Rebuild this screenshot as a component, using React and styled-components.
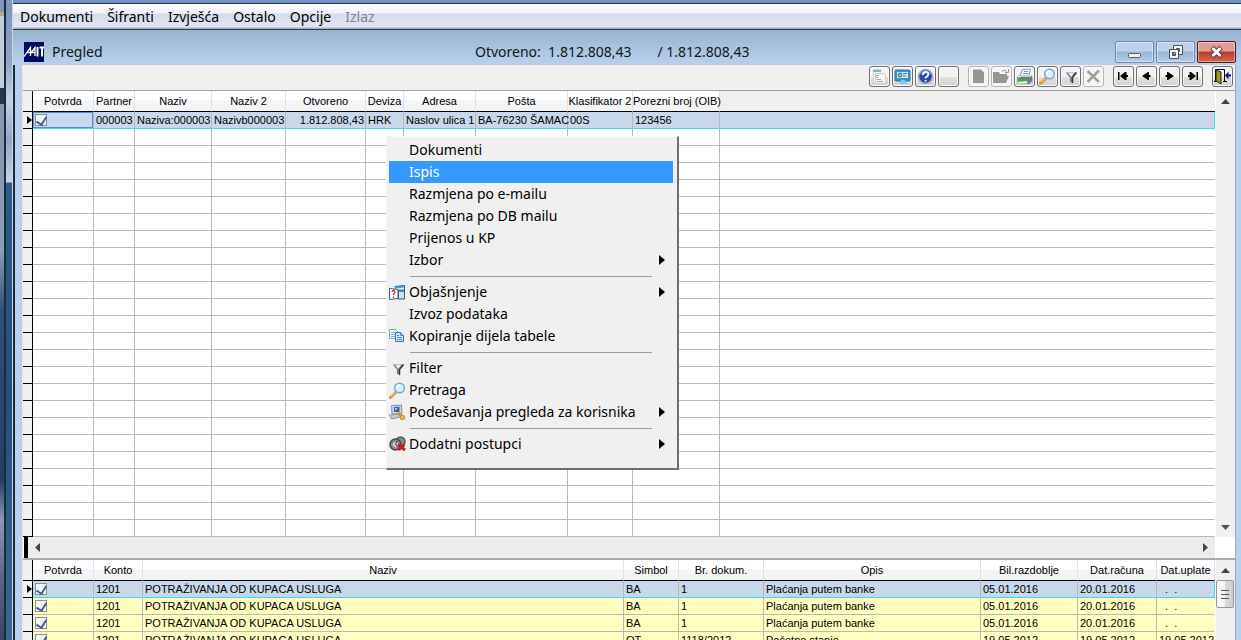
import { styled, createGlobalStyle } from "styled-components"

const menuBarItems = ["Dokumenti", "Šifranti", "Izvješća", "Ostalo", "Opcije"]

const partnerColumns = [
    { label: "Potvrda", width: 61 },
    { label: "Partner", width: 41 },
    { label: "Naziv", width: 77 },
    { label: "Naziv 2", width: 74 },
    { label: "Otvoreno", width: 80, align: "right" },
    { label: "Deviza", width: 38 },
    { label: "Adresa", width: 72 },
    { label: "Pošta", width: 92 },
    { label: "Klasifikator 2", width: 65 },
    { label: "Porezni broj (OIB)", width: 87 },
]

const partnerRow = ["000003", "Naziva:000003", "Nazivb000003", "1.812.808,43", "HRK", "Naslov ulica 1", "BA-76230 ŠAMAC", "00S", "123456"]

const documentColumns = [
    { label: "Potvrda", width: 61 },
    { label: "Konto", width: 49 },
    { label: "Naziv", width: 481 },
    { label: "Simbol", width: 55 },
    { label: "Br. dokum.", width: 85 },
    { label: "Opis", width: 217 },
    { label: "Bil.razdoblje", width: 97 },
    { label: "Dat.računa", width: 79 },
    { label: "Dat.uplate" },
]

const payment = ["1201", "POTRAŽIVANJA OD KUPACA USLUGA", "BA", "1", "Plaćanja putem banke", "05.01.2016", "20.01.2016", "\u00a0\u00a0.\u00a0\u00a0."]

const documentRows = [
    payment,
    payment,
    payment,
    ["1201", "POTRAŽIVANJA OD KUPACA USLUGA", "OT", "1118/2012", "Početno stanje", "19.05.2012", "19.05.2012", "19.05.2012"],
]

const contextMenu = [
    [
        { label: "Dokumenti" },
        { label: "Ispis", active: true },
        { label: "Razmjena po e-mailu" },
        { label: "Razmjena po DB mailu" },
        { label: "Prijenos u KP" },
        { label: "Izbor", submenu: true },
    ],
    [
        { label: "Objašnjenje", icon: <ExplainIcon />, submenu: true },
        { label: "Izvoz podataka" },
        { label: "Kopiranje dijela tabele", icon: <CopyIcon /> },
    ],
    [
        { label: "Filter", icon: <FunnelIcon /> },
        { label: "Pretraga", icon: <SearchIcon /> },
        { label: "Podešavanja pregleda za korisnika", icon: <SettingsIcon />, submenu: true },
    ],
    [
        { label: "Dodatni postupci", icon: <GearsIcon />, submenu: true },
    ],
]

const toolGroups = [
    [
        { name: "Svojstva", icon: <PropertiesIcon /> },
        { name: "Zaslon", icon: <MonitorIcon /> },
        { name: "Pomoć", icon: <HelpIcon /> },
        { name: "Prazno" },
    ],
    [
        { name: "Novi", icon: <NewIcon />, disabled: true },
        { name: "Otvori", icon: <OpenIcon />, disabled: true },
        { name: "Ispis", icon: <PrinterIcon /> },
        { name: "Pretraga", icon: <SearchIcon /> },
        { name: "Filter", icon: <FunnelIcon /> },
        { name: "Briši", icon: <DeleteIcon />, disabled: true },
    ],
    [
        { name: "Prvi", icon: <NavIcon variant="first" /> },
        { name: "Prethodni", icon: <NavIcon variant="prev" /> },
        { name: "Sljedeći", icon: <NavIcon variant="next" /> },
        { name: "Zadnji", icon: <NavIcon variant="last" /> },
    ],
    [
        { name: "Izlaz", icon: <ExitIcon /> },
    ],
]

export default function App() {
    return (
        <Desktop>
            <GlobalStyle />
            <Backdrop />
            <WindowEdge />
            <Window>
                <MenuBar>
                    {menuBarItems.map(item => <MenuBarItem key={item}>{item}</MenuBarItem>)}
                    <MenuBarItem disabled>Izlaz</MenuBarItem>
                </MenuBar>
                <TitleBar>
                    <Logo />
                    <Title>Pregled</Title>
                    <Amounts>
                        <span>Otvoreno:&nbsp; 1.812.808,43</span>
                        <span>/ 1.812.808,43</span>
                    </Amounts>
                    <Controls>
                        <ControlButton aria-label="Smanji"><MinimizeIcon /></ControlButton>
                        <ControlButton aria-label="Vrati"><RestoreIcon /></ControlButton>
                        <ControlButton aria-label="Zatvori" $close><CloseIcon /></ControlButton>
                    </Controls>
                </TitleBar>
                <Frame>
                    <Panel>
                        <Toolbar>
                            {toolGroups.map((group, i) => (
                                <ToolGroup key={i}>
                                    {group.map(tool => (
                                        <ToolButton key={tool.name} aria-label={tool.name} disabled={tool.disabled}>
                                            {tool.icon}
                                        </ToolButton>
                                    ))}
                                </ToolGroup>
                            ))}
                        </Toolbar>
                        <GridArea>
                            <PartnerTable />
                            <VerticalScroll>
                                <ScrollButton aria-label="Gore"><Arrow dir="up" /></ScrollButton>
                                <ScrollButton aria-label="Dolje"><Arrow dir="down" /></ScrollButton>
                            </VerticalScroll>
                            <ContextMenu />
                        </GridArea>
                        <HorizontalScroll>
                            <SplitHandle />
                            <HorizontalTrack>
                                <ScrollButton aria-label="Lijevo"><Arrow dir="left" /></ScrollButton>
                                <ScrollButton aria-label="Desno"><Arrow dir="right" /></ScrollButton>
                            </HorizontalTrack>
                        </HorizontalScroll>
                        <GridArea>
                            <DocumentTable />
                            <VerticalScroll>
                                <ScrollButton aria-label="Gore"><Arrow dir="up" /></ScrollButton>
                                <Thumb><ThumbGrip /></Thumb>
                            </VerticalScroll>
                        </GridArea>
                    </Panel>
                </Frame>
            </Window>
        </Desktop>
    )
}

function TableHead({ columns, filler }) {
    return (
        <>
            <colgroup>
                <Col $width={10} />
                {columns.map(col => <Col key={col.label} $width={col.width} />)}
                {filler && <Col />}
            </colgroup>
            <thead>
                <tr>
                    <HeadMarker />
                    {columns.map(col => <HeadCell key={col.label}>{col.label}</HeadCell>)}
                    {filler && <HeadFiller />}
                </tr>
            </thead>
        </>
    )
}

function PartnerTable() {
    return (
        <Table>
            <TableHead columns={partnerColumns} filler />
            <tbody>
                <Row $tone="selected">
                    <Marker><Arrow dir="row" /></Marker>
                    <Cell $focused><Check aria-label="Potvrda" defaultChecked /></Cell>
                    {partnerRow.map((value, i) => (
                        <Cell key={i} $align={partnerColumns[i + 1].align}>{value}</Cell>
                    ))}
                    <Cell />
                </Row>
                {Array.from({ length: 24 }, (_, r) => (
                    <Row key={r}>
                        <Marker />
                        {partnerColumns.map(col => <Cell key={col.label} />)}
                        <Cell $last />
                    </Row>
                ))}
            </tbody>
        </Table>
    )
}

function DocumentTable() {
    return (
        <Table>
            <TableHead columns={documentColumns} />
            <tbody>
                {documentRows.map((row, r) => (
                    <Row key={r} $tone={r === 0 ? "selected" : "yellow"}>
                        <Marker>{r === 0 && <Arrow dir="row" />}</Marker>
                        <Cell><Check aria-label="Potvrda" defaultChecked /></Cell>
                        {row.map((value, i) => <Cell key={i} $last={r > 0 && i === row.length - 1}>{value}</Cell>)}
                    </Row>
                ))}
            </tbody>
        </Table>
    )
}

function ContextMenu() {
    return (
        <Popup>
            {contextMenu.map((section, i) => (
                <Section key={i}>
                    {section.map(item => (
                        <PopupItem key={item.label} $active={item.active}>
                            <IconSlot>{item.icon}</IconSlot>
                            <PopupLabel>{item.label}</PopupLabel>
                            {item.submenu && <Arrow dir="submenu" />}
                        </PopupItem>
                    ))}
                </Section>
            ))}
        </Popup>
    )
}

function Arrow({ dir }) {
    if (dir === "up") return <svg width="9" height="5"><path d="M0 5 4.5 0 9 5z" fill="#444" /></svg>
    if (dir === "down") return <svg width="9" height="5"><path d="M0 0h9L4.5 5z" fill="#555" /></svg>
    if (dir === "left") return <svg width="5" height="9"><path d="M5 0v9L0 4.5z" fill="#444" /></svg>
    if (dir === "right") return <svg width="5" height="9"><path d="M0 0v9l5-4.5z" fill="#444" /></svg>
    if (dir === "row") return <svg width="5" height="8"><path d="M0 0v8l5-4z" fill="#000" /></svg>
    return <svg width="6" height="10"><path d="M0 0v10l6-5z" fill="currentColor" /></svg>
}

function Logo() {
    return (
        <svg width="20" height="20" viewBox="0 0 20 20">
            <rect width="20" height="20" fill="#03085c" />
            <path d="M0 14.5 6.5 5.5V14M2.5 10.5H11M7 11l4-5.5V14" fill="none" stroke="#fff" strokeWidth="1.3" />
            <path d="M13.5 5v9.500M15.500 5.500H20M18 5.500v9" fill="none" stroke="#fff" strokeWidth="2" />
        </svg>
    )
}

function MinimizeIcon() {
    return <svg width="16" height="16"><rect x="1.5" y="9.5" width="12" height="4" rx="1" fill="#f2f2f2" stroke="#555c66" /></svg>
}

function RestoreIcon() {
    return (
        <svg width="16" height="16" fillRule="evenodd">
            <path d="M5.500 1.500h9v9h-9zM8.500 4.500h3v3h-3z" fill="#f2f4f6" stroke="#4c545f" />
            <path d="M1.500 5.500h9v9h-9zM4.500 8.500h3v3h-3z" fill="#f2f4f6" stroke="#4c545f" />
        </svg>
    )
}

function CloseIcon() {
    return (
        <svg width="16" height="16">
            <path d="M3 3.500l9 9M12 3.500l-9 9" stroke="#6b3230" strokeWidth="5" />
            <path d="M3.500 4l8 8M11.500 4l-8 8" stroke="#fff" strokeWidth="3" />
        </svg>
    )
}

function PropertiesIcon() {
    return (
        <svg width="17" height="17">
            <path d="M2.5 3.5h7v11h-7z" fill="#f4f4f2" stroke="#d8d8d4" />
            <path d="M2 1.5h8v2.500H2z" fill="#80b7cf" />
            <path d="M4.500 5.500h9l1 2v8h-10z" fill="#f6f6f2" stroke="#ccccc6" />
            <path d="M5 7.500h3M5 9.500h2M6 11.500h4M6 13.500h6" stroke="#a4a6a2" />
        </svg>
    )
}

function MonitorIcon() {
    return (
        <svg width="17" height="17">
            <rect x="1" y="2" width="15" height="11" rx="1" fill="#3c92d0" stroke="#2b74ad" />
            <rect x="3" y="4" width="11" height="6" fill="#cceaf5" />
            <circle cx="6" cy="7" r="2" fill="#8fc4a0" stroke="#356f87" />
            <path d="M9 5.500h4M9 8h3" stroke="#307aa9" />
            <path d="M7 12h4v2h2v2H6v-2h1z" fill="#8cc8ea" />
        </svg>
    )
}

function HelpIcon() {
    return (
        <svg width="17" height="17">
            <circle cx="8.5" cy="8.5" r="7" fill="#2948ad" stroke="#a6aec6" strokeWidth="1.5" />
            <path d="M3.5 6a6 4 0 0 1 10 0" fill="none" stroke="#6788db" strokeWidth="2" />
            <path d="M6 7q0-3 2.700-3T11.300 6.500Q11.300 8 8.600 9.500v1M8.600 12v1.600" fill="none" stroke="#fff" strokeWidth="1.8" />
        </svg>
    )
}

function NewIcon() {
    return <svg width="17" height="17"><path d="M3 1.5h8l3 3V15H3z" fill="#969696" /></svg>
}

function OpenIcon() {
    return (
        <svg width="17" height="17">
            <path d="M0 4h6l1 2h7v2h2l-3 7H0z" fill="#969696" />
            <path d="M9 3.5q3-3 5 0M15.500 1v3.500H12" fill="none" stroke="#969696" />
        </svg>
    )
}

function PrinterIcon() {
    return (
        <svg width="17" height="17">
            <path d="m6.500 1.500 8-.5-2 7H4z" fill="#f7fafd" stroke="#7f96ab" />
            <path d="M8 3.500h4M7 5.500h5" stroke="#7396be" />
            <path d="M1 9 4 7h11l1.500 2v4L13 16H2z" fill="#6b7b86" />
            <path d="M2 9.500 4.500 8H15" fill="none" stroke="#dfe7ec" strokeWidth="1.5" />
            <path d="m2.500 11 10-.5-1 3-9 .5z" fill="#3fae3a" />
            <path d="m1 14 10-1 .5 2.500L2 16z" fill="#f4faf2" stroke="#8cb387" strokeWidth=".5" />
        </svg>
    )
}

function SearchIcon() {
    return (
        <svg width="17" height="17">
            <path d="M1.5 15.500 7 10" stroke="#d79b3e" strokeWidth="3" strokeLinecap="round" />
            <path d="m2 14 4.500-4.500" stroke="#f4cf83" />
            <circle cx="10.500" cy="6" r="4.800" fill="#d7f1fb" stroke="#7ba4cf" strokeWidth="1.5" />
            <path d="M7.500 6q.5-3 3.500-3" fill="none" stroke="#fff" strokeWidth="1.5" />
        </svg>
    )
}

function FunnelIcon() {
    return (
        <svg width="17" height="17">
            <path d="M4.500 4.500h10.500l-4 5v6l-3-2V9.500z" fill="#8b9098" />
            <path d="M6.500 5h5.500l-3 4z" fill="#eceef1" />
            <path d="M14.500 4.500 10.500 9.500v5.500" fill="none" stroke="#33373e" strokeWidth="1.5" />
            <path d="M4.500 4.500 8.500 9.500v4" fill="none" stroke="#6b7078" />
        </svg>
    )
}

function DeleteIcon() {
    return <svg width="17" height="17"><path d="M2.5 3 14 14M14 2.500 2.500 14" stroke="#a0a0a0" strokeWidth="2.5" /></svg>
}

function NavIcon({ variant }) {
    const paths = {
        first: "M3 4h1.500v8H3zM5 8l5-4h1.500v3H13v2h-1.500v3H10z",
        prev: "M4 8l6-4h1v3h1.500v2H11v3h-1z",
        next: "M13 8 7 4H6v3H4.500v2H6v3h1z",
        last: "M14 4h-1.500v8H14zM12 8 7 4H5.500v3H4v2h1.500v3H7z",
    }
    return <svg width="17" height="17"><path d={paths[variant]} fill="#000" /></svg>
}

function ExitIcon() {
    return (
        <svg width="17" height="17">
            <path d="M1.5 13.500v-12h9v12M0 13.500h3M9 13.500h4" fill="none" stroke="#000" />
            <path d="M2 2l5 2v12l-5-3z" fill="#9a9a22" stroke="#222" />
            <path d="m11 7.500 3.500-4v3H17v2h-2.500v3z" fill="#0a0a8c" />
        </svg>
    )
}

function ExplainIcon() {
    return (
        <svg width="17" height="17">
            <path d="m5.5 2.500 10-1v12h-8" fill="#eef5f9" stroke="#315f83" />
            <path d="m6 3.500 9-1" stroke="#5294bb" strokeWidth="2" />
            <path d="M9.500 6h6v9h-6z" fill="#c9e2f1" stroke="#315f83" />
            <path d="M10 7h5" stroke="#498ab4" strokeWidth="2" />
            <path d="M.5 4.500 9 5.500v9L.5 15.500z" fill="#fff" stroke="#315f83" />
            <path d="M3 8q0-1.500 1.500-1.500T6 8q0 1-1.500 2v1M4.500 12.500V14" fill="none" stroke="#d32d32" strokeWidth="1.3" />
        </svg>
    )
}

function CopyIcon() {
    return (
        <svg width="17" height="17">
            <path d="M.5 1.500h6l2 2v7h-8z" fill="#edf5ff" stroke="#7c9fcd" />
            <path d="M2 4.500h4M2 6.500h5M2 8.500h5" stroke="#88add8" />
            <path d="M6.500 4.500h5l3 3v6h-8z" fill="#d4e6fc" stroke="#3d6db2" />
            <path d="M11.500 4.500v3h3M8 7.500h2M8 9.500h5M8 11.500h5" fill="none" stroke="#5387c6" />
        </svg>
    )
}

function SettingsIcon() {
    return (
        <svg width="17" height="17">
            <path d="m2.500 1.500 10-.5.5 9H3z" fill="#cbd3dc" stroke="#8795a6" />
            <path d="m5 3 5.500-.3V8H5z" fill="#3866a0" />
            <path d="m6 4 3-.3-3 3z" fill="#a7d4f2" />
            <path d="m.5 11 10-1 1 3-9 2z" fill="#c3cad2" stroke="#8d97a2" />
            <path d="m9 9 5 5" stroke="#cc9125" strokeWidth="3" />
            <circle cx="13.500" cy="13.500" r="2.300" fill="#efbd43" stroke="#c68c28" />
        </svg>
    )
}

function GearsIcon() {
    return (
        <svg width="17" height="17">
            <circle cx="11.500" cy="5.500" r="4.500" fill="#8a8a8a" stroke="#555" strokeWidth="1.5" />
            <circle cx="6.500" cy="8.500" r="5.500" fill="#8e908f" stroke="#4b4b4b" strokeWidth="1.5" />
            <circle cx="6.500" cy="8.500" r="3.500" fill="#c9cdcc" stroke="#777" />
            <path d="M6.500 8.500 8 5M6.500 8.500l2.500 2" stroke="#333" />
            <path d="m9 8.500 7 5.500M9.500 14l6-5.500" stroke="#c71920" strokeWidth="3" />
        </svg>
    )
}

const GlobalStyle = createGlobalStyle`
    *{
        box-sizing: border-box;
    }
    body{
        margin: 0;
        overflow: hidden;
    }
    svg{
        display: block;
        flex: none;
    }
    button{
        padding: 0;
        font: inherit;
        color: inherit;
    }
`

const Desktop = styled.div`
    height: 100vh;
    display: flex;
    overflow: hidden;
    color: #000;
    font-family: "Noto Sans", sans-serif;
    font-size: 14px;
`

const Backdrop = styled.div`
    width: 4px;
    background: linear-gradient(#7f98b8 0 12px, #b9a98c 12px 16px, #c3ccd9 16px 88px, #26384f 88px 104px, #8797ad 104px 135px, #8b9fb5 250px, #2f5075 310px, #263f60 480px, #8b97b5 520px, #5a6584 580px, #3a4560);
`

const WindowEdge = styled.div`
    width: 9px;
    border-left: 2px solid #1c2a3d;
    background: linear-gradient(#8196bd 0 10px, #8fa5c4 60px, #c3d2e5 100px, #8fa7c6 140px, #c9d5e4 182px, #2d5b8e 183px, #24507f 400px, #38699a);
    border-right: 1px solid #c8d6e6;
`

const Window = styled.div`
    flex: 1;
    min-width: 0;
    display: flex;
    flex-direction: column;
    border-top: 3px solid #6f93c4;
`

const MenuBar = styled.nav`
    height: 27px;
    flex: none;
    display: flex;
    align-items: center;
    gap: 14px;
    padding-left: 7px;
    border-top: 1px solid #26364a;
    border-bottom: 1px solid #2b3a49;
    background: linear-gradient(#fff 0, #eef1f8 9px, #d5dcec 10px, #e2e5f3 23px, #a9b1bf 24px);
`

const MenuBarItem = styled.button`
    border: none;
    background: none;
    line-height: 20px;
    &:disabled{
        color: #85858f;
    }
`

const TitleBar = styled.header`
    height: 35px;
    flex: none;
    display: flex;
    align-items: center;
    padding: 8px 5px 0 11px;
    background: linear-gradient(#98b3ce, #b9d1ec);
    color: #101820;
`

const Title = styled.h1`
    width: 423px;
    margin: 0;
    padding-left: 8px;
    font-size: 14px;
    font-weight: normal;
`

const Amounts = styled.div`
    flex: 1;
    display: flex;
    gap: 26px;
    padding-left: 8px;
    white-space: nowrap;
`

const Controls = styled.div`
    display: flex;
    gap: 2px;
`

const ControlButton = styled.button`
    width: 39px;
    height: 22px;
    display: flex;
    align-items: center;
    justify-content: center;
    border: 1px solid ${({ $close }) => $close ? "#4d1b22" : "#7089a8"};
    border-radius: 2px;
    box-shadow: inset 0 0 0 1px rgba(255, 255, 255, 0.40);
    background: ${({ $close }) => $close
        ? "linear-gradient(#dd9e95 0 45%, #bd3b26 50%, #d1684f)"
        : "linear-gradient(#bdd2ea 0 45%, #98b5d5 50%, #b3cee9)"};
`

const Frame = styled.main`
    flex: 1;
    min-height: 0;
    display: flex;
    padding: 0 5px 0 7px;
    border-left: 2px solid #1d2a38;
    background: #b7d0ee;
`

const Panel = styled.section`
    flex: 1;
    min-width: 0;
    overflow: hidden;
    border-left: 1px solid #e8e8e8;
    border-right: 1px solid #a0a8b0;
    background: #f0f0f0;
`

const Toolbar = styled.div`
    height: 26px;
    display: flex;
    justify-content: flex-end;
    gap: 9px;
    padding: 1px 2px 0 0;
    border-bottom: 1px solid #a0a0a0;
`

const ToolGroup = styled.div`
    display: flex;
    gap: 2px;
`

const ToolButton = styled.button`
    width: 21px;
    height: 21px;
    display: flex;
    align-items: center;
    justify-content: center;
    border: 1px solid #707070;
    border-radius: 3px;
    box-shadow: inset 0 0 0 1px #fafafa;
    background: linear-gradient(#f3f3f3 0 50%, #e0e0e0 50%, #d2d2d2);
    &:disabled{
        border-color: #b4b4b4;
        background: #f4f4f4;
    }
`

const GridArea = styled.div`
    position: relative;
    display: flex;
`

const Table = styled.table`
    flex: 1;
    width: 100%;
    min-width: 0;
    table-layout: fixed;
    border-collapse: separate;
    border-spacing: 0;
    background: #fff;
    font-family: "Liberation Sans", Arial, sans-serif;
    font-size: 11px;
    line-height: 16px;
    white-space: nowrap;
`

const Col = styled.col`
    width: ${({ $width }) => $width ? `${$width}px` : "auto"};
`

const HeadMarker = styled.td`
    height: 21px;
    padding: 0;
    border-right: 1px solid #000;
    border-bottom: 1px solid #000;
    background: #f0f0f0;
`

const HeadCell = styled.th`
    height: 21px;
    padding: 0;
    border-right: 1px solid #e0e2e6;
    border-bottom: 1px solid #000;
    background: linear-gradient(#fff 0 45%, #f3f4f6 50%, #f3f4f6);
    font-weight: normal;
    text-align: center;
`

const HeadFiller = styled.td`
    padding: 0;
    border-bottom: 1px solid #000;
    background: #f0f0f0;
`

const Marker = styled.td`
    height: 17px;
    padding: 0 0 0 4px;
    border-right: 1px solid #000;
    border-bottom: 1px solid #000;
    background: #f0f0f0;
`

const Cell = styled.td`
    height: 17px;
    padding: 0 1px 0 2px;
    border-right: 1px solid ${({ $last }) => $last ? "transparent" : "#b9b9b9"};
    border-bottom: 1px solid #b9b9b9;
    text-align: ${({ $align }) => $align || "left"};
    ${({ $focused }) => $focused && "box-shadow: inset 0 0 0 1px #4b8fe2;"}
`

const rowColors = { selected: "#c8d7ea", yellow: "#ffffc0" }

const Row = styled.tr`
    background: ${({ $tone }) => rowColors[$tone] || "#fff"};
    ${({ $tone }) => $tone === "selected" && css_selected}
`

const css_selected = `
    td:not(:first-child){
        border-bottom-color: #35dfe3;
    }
    td:last-child{
        border-right-color: #35dfe3;
    }
`

const Check = styled.input.attrs({ type: "checkbox" })`
    appearance: none;
    display: block;
    width: 12px;
    height: 12px;
    margin: 0;
    border: 1px solid #8b8f96;
    background: #f1f3f5;
    &:checked::after{
        content: "";
        display: block;
        width: 5px;
        height: 8px;
        margin: 0 auto;
        border: solid #4a5d94;
        border-width: 0 2px 2px 0;
        transform: rotate(32deg);
    }
`

const VerticalScroll = styled.div`
    width: 20px;
    flex: none;
    display: flex;
    flex-direction: column;
    justify-content: space-between;
    border-left: 1px solid #fff;
    background: #f0f0f0;
`

const ScrollButton = styled.button`
    width: 19px;
    height: 20px;
    display: flex;
    align-items: center;
    justify-content: center;
    border: none;
    background: none;
`

const Thumb = styled.div`
    height: 28px;
    margin: 0 1px auto 0;
    display: flex;
    align-items: center;
    justify-content: center;
    border: 1px solid #979797;
    border-radius: 2px;
    background: linear-gradient(to right, #f5f5f5 0 50%, #dcdcdc 50%, #cfcfcf);
`

const ThumbGrip = styled.span`
    width: 8px;
    height: 9px;
    border-top: 1px solid #555;
    border-bottom: 1px solid #555;
    background: linear-gradient(transparent 3px, #555 3px 4px, transparent 4px);
`

const HorizontalScroll = styled.div`
    height: 23px;
    display: flex;
    padding-right: 20px;
    border-bottom: 2px solid #ababab;
    background: linear-gradient(to left, #fff 20px, #ececec 20px);
`

const SplitHandle = styled.div`
    width: 5px;
    border-left: 1px solid #fff;
    background: #000;
`

const HorizontalTrack = styled.div`
    flex: 1;
    display: flex;
    justify-content: space-between;
`

const Popup = styled.div`
    position: absolute;
    top: 45px;
    left: 363px;
    width: 293px;
    padding: 2px 4px 13px 2px;
    border: 1px solid #f7f7f7;
    border-right: 2px solid #707070;
    border-bottom: 2px solid #707070;
    background: #f0f0f0;
`

const Section = styled.div`
    & + &::before{
        content: "";
        display: block;
        height: 1px;
        margin: 5px 21px 4px 21px;
        background: #a0a0a0;
    }
`

const PopupItem = styled.button`
    width: 100%;
    height: 22px;
    display: flex;
    align-items: center;
    padding-right: 8px;
    border: none;
    background: ${({ $active }) => $active ? "#3399ff" : "none"};
    color: ${({ $active }) => $active ? "#fff" : "#000"};
    line-height: 20px;
    text-align: left;
`

const IconSlot = styled.span`
    width: 20px;
    flex: none;
`

const PopupLabel = styled.span`
    flex: 1;
    white-space: nowrap;
`
